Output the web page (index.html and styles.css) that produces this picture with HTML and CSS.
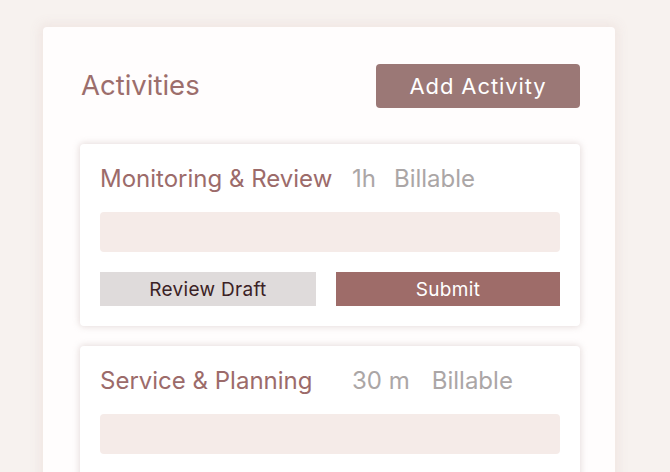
FILE: index.html
```html
<!DOCTYPE html>
<html lang="en">
<head>
<meta charset="utf-8">
<title>Activities</title>
<link rel="stylesheet" href="styles.css">
</head>
<body>
<main class="panel">
  <header class="panel-header">
    <h1 class="panel-title">Activities</h1>
    <button class="btn-add">Add Activity</button>
  </header>
  <section class="cards">
    <article class="card">
      <div class="card-head">
        <span class="card-title">Monitoring &amp; Review</span>
        <span class="card-meta">1h</span>
        <span class="card-meta">Billable</span>
      </div>
      <div class="card-note"></div>
      <div class="card-actions">
        <button class="btn-draft">Review Draft</button>
        <button class="btn-submit">Submit</button>
      </div>
    </article>
    <article class="card">
      <div class="card-head">
        <span class="card-title">Service &amp; Planning</span>
        <span class="card-meta card-meta-wide">30 m</span>
        <span class="card-meta">Billable</span>
      </div>
      <div class="card-note"></div>
      <div class="card-actions">
        <button class="btn-draft">Review Draft</button>
        <button class="btn-submit">Submit</button>
      </div>
    </article>
  </section>
</main>
</body>
</html>
```

FILE: styles.css
```css
* { box-sizing: border-box; }
html, body {
  margin: 0;
  height: 100%;
  overflow: hidden;
  background: #f7f2ef;
  font-family: Inter, "Liberation Sans", sans-serif;
}
.panel {
  margin: 27px 0 0 43px;
  width: 572px;
  height: 520px;
  overflow: hidden;
  background: #fffdfd;
  box-shadow: 0 0 10px 4px rgba(240, 230, 226, 0.9);
  border-radius: 4px;
  padding: 37px 35px 0 37px;
}
.panel-header {
  display: flex;
  justify-content: space-between;
  align-items: center;
  height: 44px;
  padding-left: 1px;
}
.panel-title {
  margin: -2px 0 0 0;
  font-size: 27.5px;
  font-weight: 400;
  color: #9c6e6c;
}
.btn-add {
  width: 204px;
  height: 44px;
  border: none;
  border-radius: 4px;
  background: #9b7876;
  color: #fff;
  font-family: inherit;
  font-size: 22px;
  letter-spacing: 0.9px;
  font-weight: 400;
  padding: 0;
}
.cards {
  margin-top: 36px;
  display: flex;
  flex-direction: column;
  gap: 20px;
}
.card {
  background: #fff;
  border-radius: 4px;
  box-shadow: 0 0 6px 1px rgba(200, 185, 182, 0.45);
  padding: 20px;
}
.card-head {
  display: flex;
  align-items: center;
  height: 28px;
  font-size: 24px;
}
.card-title {
  width: 230px;
  white-space: nowrap;
  color: #9c6b6a;
}
.card-meta {
  margin-left: 18px;
  color: #aba6a6;
  white-space: nowrap;
}
.card-title + .card-meta { margin-left: 22px; }
.card-meta-wide + .card-meta { margin-left: 22px; }
.card-note {
  margin-top: 20px;
  height: 40px;
  border-radius: 4px;
  background: #f5ebe8;
}
.card-actions {
  margin-top: 20px;
  display: flex;
  gap: 20px;
}
.card-actions button {
  height: 34px;
  border: none;
  font-family: inherit;
  font-size: 19px;
  letter-spacing: 0.3px;
  padding: 0;
}
.btn-draft {
  width: 216px;
  background: #dfdbdb;
  color: #3b2225;
}
.btn-submit {
  flex: 1;
  background: #9e6c69;
  color: #fff;
}
```
